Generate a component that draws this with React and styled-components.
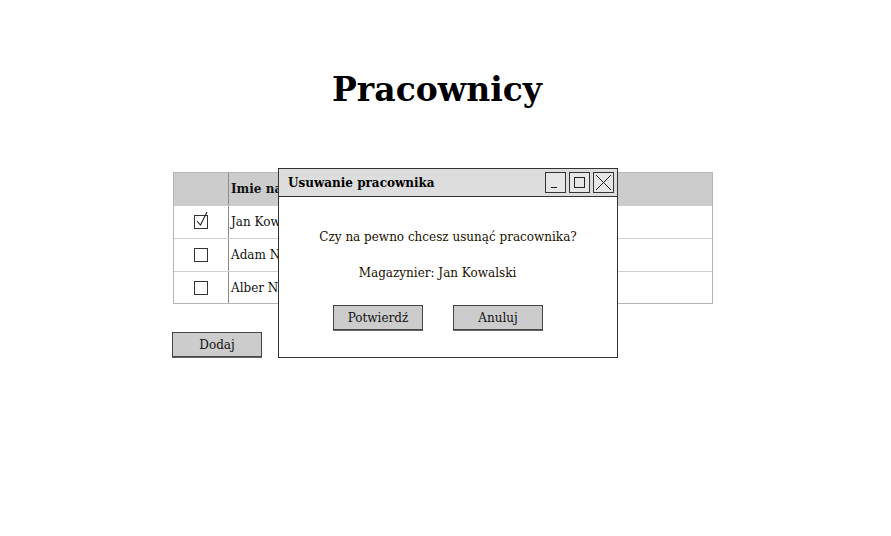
import React from 'react'
import styled, { createGlobalStyle } from 'styled-components'

const GlobalStyle = createGlobalStyle`
  body {
    margin: 0;
    background: #fff;
    font-family: 'DejaVu Serif', 'Liberation Serif', serif;
    color: #111;
  }
`

const Page = styled.div`
  width: 891px;
  height: 536px;
  position: relative;
  overflow: hidden;
`

const Title = styled.h1`
  margin: 0;
  padding: 71px 17px 0 0;
  height: 172px;
  box-sizing: border-box;
  text-align: center;
  font-size: 33px;
  line-height: 38px;
  font-weight: bold;
  color: #000;
`

const Content = styled.div`
  margin-left: 173px;
  width: 540px;
  display: flex;
  flex-direction: column;
  align-items: flex-start;
`

const Table = styled.div`
  width: 540px;
  border: 1px solid #b5b5b5;
  box-sizing: border-box;
`

const Row = styled.div`
  display: grid;
  grid-template-columns: 54px 1fr;
  height: ${(p) => (p.$head ? 32 : 33)}px;
  background: ${(p) => (p.$head ? '#cccccc' : '#fff')};
  border-top: ${(p) => (p.$head ? 'none' : '1px solid #cfcfcf')};
  box-sizing: border-box;

  &:last-child {
    height: 32px;
  }
`

const Cell = styled.div`
  display: flex;
  align-items: center;
  justify-content: ${(p) => (p.$center ? 'center' : 'flex-start')};
  padding-left: ${(p) => (p.$center ? 0 : 2)}px;
  border-left: ${(p) => (p.$first ? 'none' : '1px solid #8a8a8a')};
  font-size: 12px;
  font-weight: ${(p) => (p.$bold ? 'bold' : 'normal')};
  white-space: nowrap;
`

const Check = styled.span`
  width: 14px;
  height: 14px;
  border: 1px solid #333;
  box-sizing: border-box;
  position: relative;
  display: block;
`

const Tick = styled.svg`
  position: absolute;
  left: 1px;
  top: -5px;
`

const Button = styled.button`
  width: 90px;
  height: 25px;
  background: #cccccc;
  border: 1px solid #444;
  box-shadow: 0 1px 0 #666;
  font-family: 'DejaVu Serif', 'Liberation Serif', serif;
  font-size: 12px;
  color: #111;
  padding: 0;
  cursor: pointer;
`

const AddButton = styled(Button)`
  margin-top: 28px;
  margin-left: -1px;
`

const Dialog = styled.div`
  position: absolute;
  left: 278px;
  top: 168px;
  width: 340px;
  height: 190px;
  background: #fff;
  border: 1px solid #333;
  box-sizing: border-box;
  display: flex;
  flex-direction: column;
`

const TitleBar = styled.div`
  height: 28px;
  background: #dddddd;
  border-bottom: 1px solid #333;
  display: flex;
  align-items: center;
  justify-content: space-between;
  padding: 0 3px 0 9px;
  box-sizing: border-box;
`

const DialogTitle = styled.span`
  font-size: 12px;
  font-weight: bold;
  color: #000;
`

const WinButtons = styled.div`
  display: flex;
  gap: 3px;
`

const WinButton = styled.div`
  width: 21px;
  height: 21px;
  border: 1px solid #333;
  box-sizing: border-box;
  background: #e6e6e6;
  display: flex;
  align-items: center;
  justify-content: center;
`

const Body = styled.div`
  flex: 1;
  display: flex;
  flex-direction: column;
  align-items: center;
  padding-top: 32px;
  font-size: 12px;
  color: #1a0f00;
`

const Line = styled.div`
  height: 16px;
  line-height: 16px;
  margin-bottom: ${(p) => p.$gap || 0}px;
  margin-left: ${(p) => p.$shift || 0}px;
`

const Actions = styled.div`
  display: flex;
  gap: 30px;
  margin-left: -20px;
`

const rows = ['Jan Kowalski', 'Adam Nowak', 'Alber Nowicki']

export default function App() {
  return (
    <Page>
      <GlobalStyle />
      <Title>Pracownicy</Title>
      <Content>
        <Table>
          <Row $head>
            <Cell $first />
            <Cell $bold>Imie nazwisko</Cell>
          </Row>
          {rows.map((name, i) => (
            <Row key={name}>
              <Cell $first $center>
                <Check>
                  {i === 0 && (
                    <Tick width="14" height="16" viewBox="0 0 14 16">
                      <path d="M1 10 L4.5 14 L11 1" fill="none" stroke="#222" strokeWidth="1.1" />
                    </Tick>
                  )}
                </Check>
              </Cell>
              <Cell>{name}</Cell>
            </Row>
          ))}
        </Table>
        <AddButton>Dodaj</AddButton>
      </Content>

      <Dialog>
        <TitleBar>
          <DialogTitle>Usuwanie pracownika</DialogTitle>
          <WinButtons>
            <WinButton>
              <svg width="19" height="19" viewBox="0 0 19 19">
                <path d="M5 14.5 H11" stroke="#222" strokeWidth="1" />
              </svg>
            </WinButton>
            <WinButton>
              <svg width="19" height="19" viewBox="0 0 19 19">
                <rect x="4.5" y="4.5" width="10" height="10" fill="none" stroke="#222" strokeWidth="1" />
              </svg>
            </WinButton>
            <WinButton>
              <svg width="19" height="19" viewBox="0 0 19 19">
                <path d="M2 2 L17 17 M17 2 L2 17" stroke="#222" strokeWidth="1" />
              </svg>
            </WinButton>
          </WinButtons>
        </TitleBar>
        <Body>
          <Line $gap={20}>Czy na pewno chcesz usunąć pracownika?</Line>
          <Line $gap={24} $shift={-21}>Magazynier: Jan Kowalski</Line>
          <Actions>
            <Button>Potwierdź</Button>
            <Button>Anuluj</Button>
          </Actions>
        </Body>
      </Dialog>
    </Page>
  )
}
